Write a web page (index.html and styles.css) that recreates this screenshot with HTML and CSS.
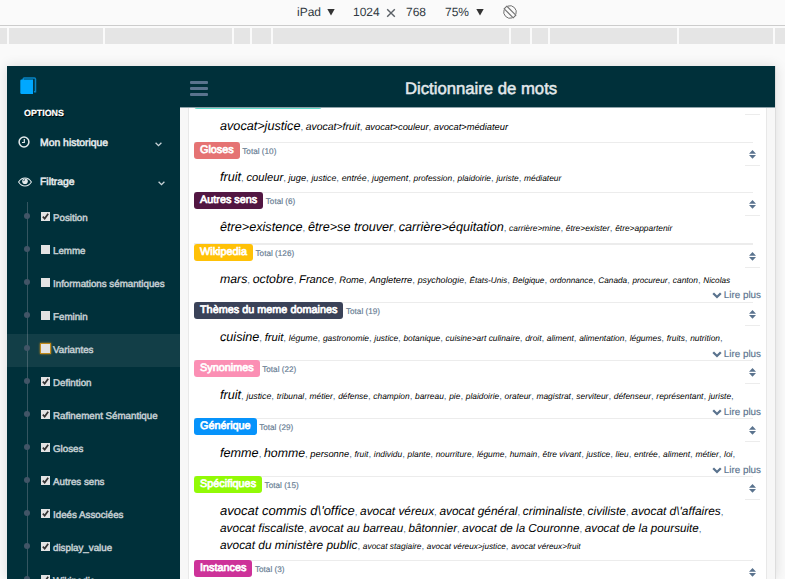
FILE: index.html
```html
<!DOCTYPE html>
<html lang="fr">
<head>
<meta charset="utf-8">
<title>Dictionnaire de mots</title>
<link rel="stylesheet" href="styles.css">
</head>
<body>
<svg class="defs" aria-hidden="true">
  <symbol id="sort" viewBox="0 0 7 9"><path d="M0 3.7 3.5 0 7 3.7zM0 5.1h7L3.5 8.8z" fill="#5a738e"/></symbol>
  <symbol id="down" viewBox="0 0 10 7"><path d="M1.2 1.3 5 5 8.8 1.3" fill="none" stroke="#5a738e" stroke-width="2.3"/></symbol>
  <symbol id="check" viewBox="0 0 9 9"><path d="M1.8 4.6 3.7 6.6 7.2 1.8" fill="none" stroke="#333" stroke-width="1.7"/></symbol>
</svg>
<div class="toolbar">
  <span>iPad</span><span class="caret"></span><span>1024</span>
  <svg class="times" width="10" height="10" viewBox="0 0 10 10"><path d="M1.2 1.2 8.8 8.8M8.8 1.2 1.2 8.8" stroke="#5a6066" stroke-width="1.4"/></svg>
  <span>768</span><span>75%</span><span class="caret"></span>
  <svg width="14" height="14" viewBox="0 0 14 14" fill="none" stroke="#6e6e6e"><path d="M4.7 1.1A6.4 6.4 0 0 1 12.9 9.3M9.3 12.9A6.4 6.4 0 0 1 1.1 4.7" stroke-width="1"/><path d="M3.8 1.2 12.8 10.2 10.2 12.8 1.2 3.8z" stroke-width="1.1"/></svg>
</div>
<div class="ruler"><i class="r7"></i><i class="r94"></i><i class="r127"></i><i class="r16"></i><i class="r19"></i><i class="r236"></i><i class="r19"></i><i class="r16"></i><i class="r127"></i><i class="r94"></i><i class="r10"></i></div>
<div class="app">
  <aside>
    <svg class="logo" width="17" height="18" viewBox="0 0 17 18"><path d="M3.2 3V2Q3.2.9 4.3.9H14.4Q15.5.9 15.5 2v12.8h-1.6" fill="#003848" stroke="#0784c4" stroke-width="1.5"/><path d="M.3 3.8Q.3 2.4 1.6 2.4H13V17H1.5Q.3 17 .3 15.7z" fill="#00a8ff"/></svg>
    <h3>OPTIONS</h3>
    <div class="menu m1">
      <svg class="clock" width="13" height="13" viewBox="0 0 13 13" fill="none" stroke="#e4eaec"><circle cx="6" cy="6" r="4.9" stroke-width="1.5"/><path d="M6.3 3v3.5H4" stroke-width="1.2"/></svg>
      <span>Mon historique</span>
      <svg class="chev" width="7" height="5" viewBox="0 0 7 5"><path d="M.6.8 3.5 3.7 6.4.8" fill="none" stroke="#c8d4d8" stroke-width="1.3"/></svg>
    </div>
    <div class="menu m2">
      <svg width="14" height="10" viewBox="0 0 14 10" fill="none" stroke="#e4eaec"><path d="M.6 5Q3 1 7 1t6.4 4Q11 9 7 9T.6 5z" stroke-width="1.1"/><circle cx="7" cy="4.2" r="2.8" fill="#e4eaec" stroke="none"/><path d="M5.6 4.1Q5.7 2.8 7 2.7" stroke="#00303a" stroke-width=".8"/></svg>
      <span>Filtrage</span>
      <svg class="chev" width="7" height="5" viewBox="0 0 7 5"><path d="M.6.8 3.5 3.7 6.4.8" fill="none" stroke="#c8d4d8" stroke-width="1.3"/></svg>
    </div>
    <ul>
      <li><svg class="box"><use href="#check"/></svg>Position</li>
      <li><svg class="box"></svg>Lemme</li>
      <li><svg class="box"></svg>Informations sémantiques</li>
      <li><svg class="box"></svg>Feminin</li>
      <li class="hover"><svg class="box focus"></svg>Variantes</li>
      <li><svg class="box"><use href="#check"/></svg>Defintion</li>
      <li><svg class="box"><use href="#check"/></svg>Rafinement Sémantique</li>
      <li><svg class="box"><use href="#check"/></svg>Gloses</li>
      <li><svg class="box"><use href="#check"/></svg>Autres sens</li>
      <li><svg class="box"><use href="#check"/></svg>Ideés Associées</li>
      <li><svg class="box"><use href="#check"/></svg>display_value</li>
      <li><svg class="box"><use href="#check"/></svg>Wikipedia</li>
    </ul>
  </aside>
  <main>
    <header><div class="burger"><i></i><i></i><i></i></div><h1>Dictionnaire de mots</h1></header>
    <div class="panel"><div class="list">
      <section class="first">
        <div class="head"><span class="badge cyan"></span><span class="sort"><svg><use href="#sort"/></svg></span></div>
        <p><em class="xl">avocat&gt;justice</em>, <em class="md">avocat&gt;fruit</em>, <em class="sm">avocat&gt;couleur</em>, <em class="sm">avocat&gt;médiateur</em></p>
      </section>
      <section class="short">
        <div class="head"><span class="badge red">Gloses</span><small>Total (10)</small><span class="sort"><svg><use href="#sort"/></svg></span></div>
        <p><em class="xl">fruit</em>, <em class="lg">couleur</em>, <em class="sm">juge</em>, <em class="s">justice</em>, <em class="s">entrée</em>, <em class="s">jugement</em>, <em>profession</em>, <em>plaidoirie</em>, <em>juriste</em>, <em>médiateur</em></p>
      </section>
      <section>
        <div class="head"><span class="badge plum">Autres sens</span><small>Total (6)</small><span class="sort"><svg><use href="#sort"/></svg></span></div>
        <p><em class="xl">être&gt;existence</em>, <em class="xl">être&gt;se trouver</em>, <em class="xl">carrière&gt;équitation</em>, <em>carrière&gt;mine</em>, <em>être&gt;exister</em>, <em>être&gt;appartenir</em></p>
      </section>
      <section class="wiki">
        <div class="head"><span class="badge gold">Wikipedia</span><small>Total (126)</small><span class="sort"><svg><use href="#sort"/></svg></span></div>
        <p><em class="l">mars</em>, <em class="l">octobre</em>, <em class="lg">France</em>, <em class="sm">Rome</em>, <em class="sm">Angleterre</em>, <em class="s">psychologie</em>, <em class="xs">États-Unis</em>, <em class="xs">Belgique</em>, <em class="xs">ordonnance</em>, <em class="xs">Canada</em>, <em class="xs">procureur</em>, <em>canton</em>, <em class="xs">Nicolas</em></p>
        <a><svg><use href="#down"/></svg>Lire plus</a>
      </section>
      <section class="more">
        <div class="head"><span class="badge navy">Thèmes du meme domaines</span><small>Total (19)</small><span class="sort"><svg><use href="#sort"/></svg></span></div>
        <p><em class="xl">cuisine</em>, <em class="lg">fruit</em>, <em class="s">légume</em>, <em>gastronomie</em>, <em>justice</em>, <em>botanique</em>, <em>cuisine&gt;art culinaire</em>, <em>droit</em>, <em>aliment</em>, <em>alimentation</em>, <em>légumes</em>, <em>fruits</em>, <em>nutrition</em>,</p>
        <a><svg><use href="#down"/></svg>Lire plus</a>
      </section>
      <section class="more">
        <div class="head"><span class="badge pink">Synonimes</span><small>Total (22)</small><span class="sort"><svg><use href="#sort"/></svg></span></div>
        <p><em class="xl">fruit</em>, <em class="s">justice</em>, <em>tribunal</em>, <em>métier</em>, <em>défense</em>, <em>champion</em>, <em>barreau</em>, <em>pie</em>, <em>plaidoirie</em>, <em>orateur</em>, <em>magistrat</em>, <em>serviteur</em>, <em>défenseur</em>, <em>représentant</em>, <em>juriste</em>,</p>
        <a><svg><use href="#down"/></svg>Lire plus</a>
      </section>
      <section class="more">
        <div class="head"><span class="badge blue">Générique</span><small>Total (29)</small><span class="sort"><svg><use href="#sort"/></svg></span></div>
        <p><em class="xl">femme</em>, <em class="l">homme</em>, <em class="sm">personne</em>, <em>fruit</em>, <em>individu</em>, <em>plante</em>, <em>nourriture</em>, <em>légume</em>, <em>humain</em>, <em>être vivant</em>, <em>justice</em>, <em>lieu</em>, <em>entrée</em>, <em>aliment</em>, <em>métier</em>, <em>loi</em>,</p>
        <a><svg><use href="#down"/></svg>Lire plus</a>
      </section>
      <section class="tall">
        <div class="head"><span class="badge lime">Spécifiques</span><small>Total (15)</small><span class="sort"><svg><use href="#sort"/></svg></span></div>
        <p><em class="xxl">avocat commis d\'office</em>, <em class="m">avocat véreux</em>, <em class="m">avocat général</em>, <em class="m">criminaliste</em>, <em class="m">civiliste</em>, <em class="m">avocat d\'affaires</em>,<br><em class="m">avocat fiscaliste</em>, <em class="m2x">avocat au barreau</em>, <em class="m2x">bâtonnier</em>, <em class="m2x">avocat de la Couronne</em>, <em class="m2x">avocat de la poursuite</em>,<br><em class="m">avocat du ministère public</em>, <em>avocat stagiaire</em>, <em class="xs">avocat véreux&gt;justice</em>, <em class="xs">avocat véreux&gt;fruit</em></p>
      </section>
      <section>
        <div class="head"><span class="badge magenta">Instances</span><small>Total (3)</small><span class="sort"><svg><use href="#sort"/></svg></span></div>
      </section>
    </div></div>
  </main>
</div>
</body>
</html>
```
FILE: styles.css
```css
* { box-sizing: border-box; }
body {
  margin: 0;
  height: 579px;
  overflow: hidden;
  background: #fafafa;
  font-family: "Liberation Sans", Arial, sans-serif;
  text-rendering: geometricPrecision;
}
svg { display: block; }
.defs { position: absolute; width: 0; height: 0; }

.toolbar {
  display: grid;
  grid-template-columns: 30px 26px 33px 20px 39px 31px 27px 14px;
  align-items: center;
  height: 26px;
  padding: 0 0 2px 297px;
  border-bottom: 1px solid #ccc;
  font-size: 12px;
  color: #303942;
}
.times { margin-top: 3px; }
.caret {
  width: 8px;
  height: 7px;
  margin-top: 1px;
  background: #333;
  clip-path: polygon(0 0, 100% 0, 50% 100%);
}
.ruler { display: flex; gap: 2px; height: 16px; margin-top: 2px; }
.ruler i { height: 16px; background: #e5e5e5; }
.r7 { width: 7px; }
.r10 { width: 10px; }
.r16 { width: 16px; }
.r19 { width: 19px; }
.r94 { width: 94px; }
.r127 { width: 127px; }
.r236 { width: 236px; }

.app {
  display: flex;
  width: 769px;
  height: 513px;
  margin: 22px 0 0 7px;
  border-right: 1px solid #ddd;
  box-shadow: 0 0 12px rgba(0, 0, 0, .12);
}
aside { width: 173px; background: #00303a; color: #e7eced; overflow: hidden; }
.logo { margin: 11px 0 0 13px; }
h3 {
  height: 11px;
  margin: 13px 0 0 17px;
  font-size: 8.9px;
  line-height: 11px;
  color: #fff;
  text-shadow: 1px 1px #000;
  -webkit-text-stroke: .2px;
}
.menu {
  display: grid;
  align-items: center;
  height: 38px;
  font-size: 10.4px;
  -webkit-text-stroke: .5px;
}
.m1 { grid-template-columns: 22px 115px 7px; margin: 5px 0 0 11px; }
.m2 { grid-template-columns: 22px 118px 7px; padding-top: 2px; margin-left: 11px; }
.clock { margin-top: -2px; }
.chev { margin-top: 2px; }
ul {
  height: 378px;
  margin: 2px 0 0;
  padding: 0;
  list-style: none;
  background: linear-gradient(#345560, #345560) 20px 0 / 1px 100% no-repeat;
}
li {
  display: flex;
  align-items: center;
  height: 33px;
  padding-left: 17px;
  font-size: 9.75px;
  color: #c3ced2;
  -webkit-text-stroke: .5px;
}
li::before {
  content: "";
  width: 6px;
  height: 6px;
  margin: -5px 11px 0 0;
  border-radius: 50%;
  background: #425567;
}
.hover { background: rgba(255, 255, 255, .07); }
.box {
  width: 9px;
  height: 9px;
  margin: -4px 3px 0 0;
  background: #e3e3e3;
}
.focus { box-shadow: 0 0 0 1px #c08a1c, 0 0 2px 1px #c08a1c; }

main { display: flex; flex-direction: column; width: 595px; background: #f7f7f7; }
header {
  z-index: 1;
  display: flex;
  flex: none;
  align-items: center;
  height: 42px;
  padding-left: 10px;
  background: #00303a;
  border-bottom: 1px solid #8fa3aa;
}
.burger { display: grid; gap: 3px; width: 18px; margin-top: 3px; }
.burger i { height: 3px; border-radius: 1px; background: #5a738e; }
h1 {
  margin: 4px 0 0 197px;
  font-size: 16.7px;
  font-weight: 400;
  color: #e3e9ec;
  -webkit-text-stroke: .5px;
}
.panel {
  height: 471px;
  margin: 0 8px;
  overflow: hidden;
  background: #fff;
  border: solid #e8e8e8;
  border-width: 0 1px;
}
.list { width: 567px; margin: -17px 0 0 5px; }
section {
  height: 51px;
  background: linear-gradient(#ececec, #ececec) 0 0 / 559px 1px no-repeat;
}
.short { height: 50px; }
.wiki { height: 59px; padding-top: 1px; background-size: 559px 2px; }
.more { height: 58px; }
.tall { height: 84px; }
.head { display: flex; align-items: flex-start; height: 17px; padding-right: 1px; }
.badge {
  height: 17px;
  padding: 0 6px;
  border-radius: 3px;
  font-size: 10.85px;
  line-height: 17px;
  color: #fff;
  -webkit-text-stroke: .7px;
}
.cyan { width: 128px; height: 18px; background: #5fdccb; }
.red { background: #e57373; }
.plum { background: #521642; }
.gold { background: #ffc107; }
.navy { background: #3a4258; }
.pink { background: #fb8fb4; }
.blue { background: #0693fb; }
.lime { background: #92fa06; }
.magenta { background: #cd3299; }
small { margin-left: 2.5px; font-size: 8.2px; line-height: 19px; color: #667b92; -webkit-text-stroke: .15px; }
.sort {
  width: 15px;
  height: 24px;
  margin-left: auto;
  padding: 8px 0 0 4px;
  border-bottom: 1px solid #ececec;
}
.sort svg { width: 7px; height: 9px; }
p {
  margin: 11px 0 1px 26px;
  font-size: 9.6px;
  line-height: 17px;
  color: #4f6a88;
  white-space: nowrap;
}
em { font-size: 8.4px; line-height: 1; color: #000; }
.xxl { font-size: 13px; }
.xl { font-size: 12.65px; }
.l { font-size: 12.3px; }
.m { font-size: 11.9px; }
.m2x { font-size: 11.65px; }
.lg { font-size: 11.2px; }
.md { font-size: 10.4px; }
.sm { font-size: 9.3px; }
.s { font-size: 8.8px; }
.xs { font-size: 8.2px; }
a {
  display: flex;
  justify-content: flex-end;
  align-items: center;
  gap: 2px;
  height: 13px;
  font-size: 9.85px;
  color: #5a738e;
  -webkit-text-stroke: .15px;
}
.wiki p { margin-bottom: 0; }
a svg { width: 10px; height: 7px; }
```
